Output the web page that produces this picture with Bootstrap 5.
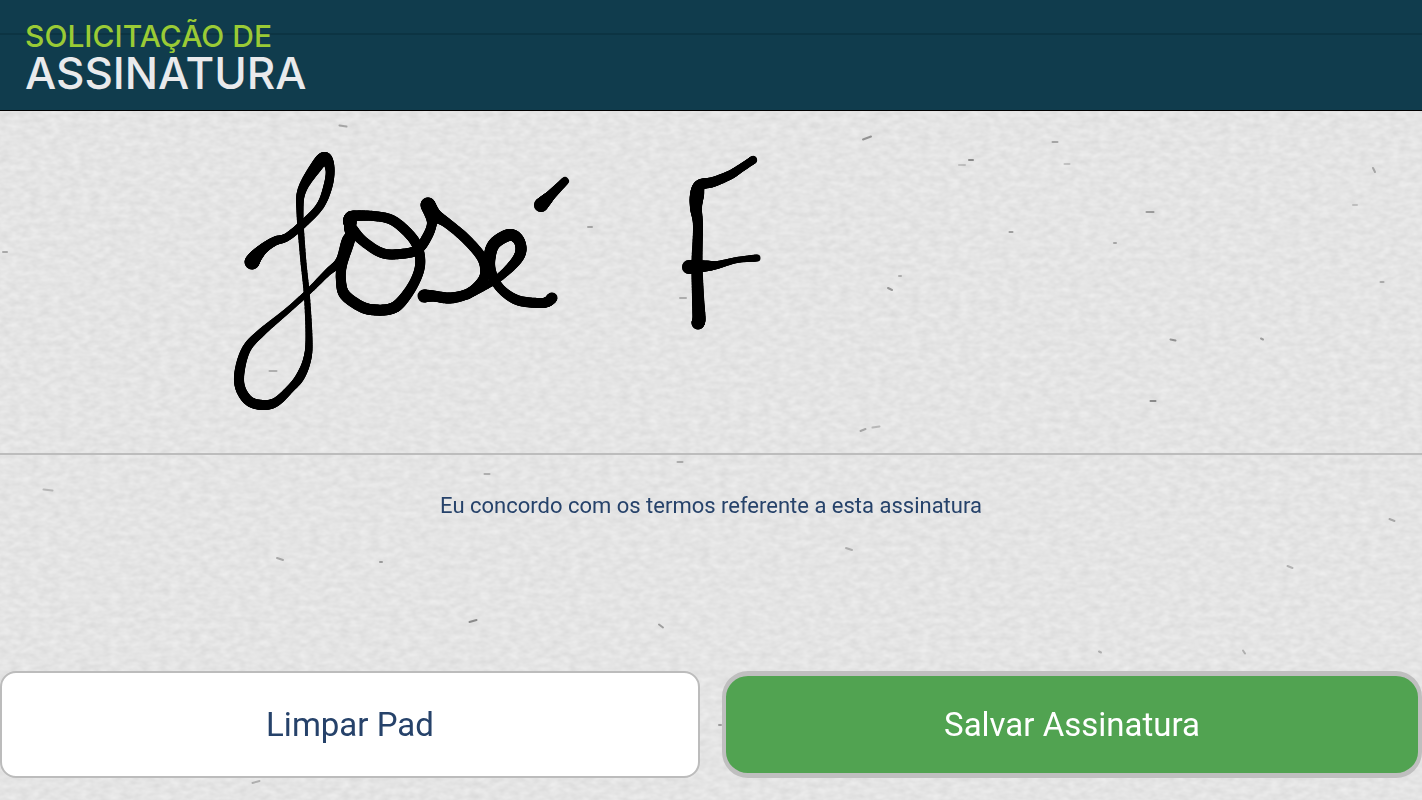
<!DOCTYPE html>
<html lang="pt-BR">
<head>
<meta charset="utf-8">
<meta name="viewport" content="width=device-width, initial-scale=1">
<title>Solicitação de Assinatura</title>
<link href="https://cdn.jsdelivr.net/npm/bootstrap@5.3.0/dist/css/bootstrap.min.css" rel="stylesheet">
<style>
  body { font-family: Roboto, "Liberation Sans", sans-serif; background: #e4e4e4; color: #26426a; }
  .paper { position: fixed; inset: 0; z-index: -1; width: 100%; height: 100%; }
  .top-bar {
    padding: 20px 25px 16px; border-bottom: 1px solid #000;
    background: linear-gradient(#103c4d 33px, #0c3443 33px, #0c3443 35px, #103c4d 35px);
  }
  .top-title { font-family: Inter, "Liberation Sans", sans-serif; font-weight: 500; color: #e9eaec; font-size: 44px; line-height: 42px; }
  .top-title .kicker { color: #9acb35; font-size: 30px; line-height: 32px; }
  .sign-pad { width: 100%; height: auto; touch-action: none; }
  .sign-line { height: 2px; background: #bdbdbd; }
  .terms { font-size: 22px; line-height: 30px; padding: 36px 16px; }
  .actions { gap: 22px; padding-bottom: 22px; }
  .pad-btn { --bs-btn-font-size: 33px; height: 107px; flex: 1 1 50%; }
  .pad-btn-clear { border: 2px solid #bcbcbc; border-radius: 16px; background: #fff; color: #26426a; }
  .pad-btn-save { border: 4px solid #bfbfbf; border-width: 5px 4px; border-radius: 26px; background: #51a351; color: #fff; }
  .pad-btn-clear:hover { background: #f4f4f4; }
  .pad-btn-save:hover { background: #458f45; color: #fff; }
</style>
</head>
<body class="d-flex flex-column min-vh-100">
<svg class="paper" aria-hidden="true">
  <filter id="grain" x="0" y="0" width="100%" height="100%" color-interpolation-filters="sRGB">
    <feTurbulence type="fractalNoise" baseFrequency=".1 .17" numOctaves="2" seed="8"/>
    <feColorMatrix values=".09 0 0 0 .85  .09 0 0 0 .85  .09 0 0 0 .85  0 0 0 0 1"/>
  </filter>
  <rect width="100%" height="100%" filter="url(#grain)"/>
  <g id="flecks" fill="none" stroke-linecap="round"></g>
</svg>

<header class="top-bar">
  <h1 class="top-title mb-0"><span class="kicker d-block">SOLICITAÇÃO DE</span>ASSINATURA</h1>
</header>

<main class="d-flex flex-column flex-grow-1">
  <canvas class="sign-pad d-block" id="pad" width="1422" height="342" role="img" aria-label="Assinatura"></canvas>
  <div class="sign-line"></div>
  <p class="terms text-center mb-0">Eu concordo com os termos referente a esta assinatura</p>
  <div class="actions d-flex mt-auto">
    <button type="button" class="btn pad-btn pad-btn-clear" id="clear">Limpar Pad</button>
    <button type="button" class="btn pad-btn pad-btn-save">Salvar Assinatura</button>
  </div>
</main>

<script src="https://cdn.jsdelivr.net/npm/bootstrap@5.3.0/dist/js/bootstrap.bundle.min.js"></script>
<script>
  // Pen strokes: x, y, pen width
  const strokes = [
    [[252,151,15],[256,145,13],[264,137,10],[275,130,9],[287,126,8],[303,113,8],[320,95,8],[328,75,9],[330,58,9],[325,47,12],[316,56,12],[302,79,9],[300,102,7],[303,146,6],[307,186,6],[309,229,7],[307,249,8],[300,266,9],[290,278,8],[276,291,9],[263,294,10],[249,290,10],[240,276,10],[240,258,10],[247,237,9],[262,221,8],[287,200,6],[307,182,6],[327,162,7],[340,150,9],[347,129,10],[354,122,10]],
    [[350,112,13],[350,108,13],[354,105,11],[373,105,10],[392,109,10],[409,123,10],[418,137,10],[420,155,10],[413,174,10],[400,192,11],[390,198,11],[376,199,11],[362,196,11],[345,184,11],[341,170,10],[342,154,10],[350,129,10],[350,116,12]],
    [[350,116,12],[363,130,10],[382,142,10],[400,143,10],[417,139,10],[427,126,10],[432,111,10],[428,94,15]],
    [[428,94,15],[435,104,13],[447,112,10],[466,128,10],[482,147,10],[485,163,10],[479,174,10],[467,183,10],[450,187,11],[433,185,11],[424,185,13]],
    [[467,184,9],[484,176,7],[501,165,8],[516,150,10],[521,139,11],[518,128,11],[509,124,12],[495,132,12],[490,144,12],[491,160,10],[500,177,9],[517,189,10],[538,192,10],[547,191,10],[552,187,11]],
    [[541,94,14],[546,89,12],[551,84,10],[565,70,8]],
    [[753,49,8],[741,57,8],[730,64,9],[713,71,10],[700,74,11],[697,84,14],[696,97,12],[698,115,10],[697,152,11],[698,186,12],[699,207,13],[698,212,13]],
    [[689,156,14],[706,155,11],[717,154,8],[737,149,6],[757,147,7]]
  ];
  const pad = document.getElementById('pad');
  const ink = pad.getContext('2d');
  const curve = (a, b, c, d, t) =>
    (2 * b + (c - a) * t + (2 * a - 5 * b + 4 * c - d) * t * t + (3 * b - a - 3 * c + d) * t * t * t) / 2;
  for (const s of strokes) {
    for (let i = 0; i < s.length - 1; i++) {
      const a = s[i - 1] || s[i], b = s[i], c = s[i + 1], d = s[i + 2] || c;
      let last = b;
      for (let k = 1; k <= 12; k++) {
        const p = [0, 1, 2].map(n => curve(a[n], b[n], c[n], d[n], k / 12));
        ink.lineWidth = p[2];
        ink.lineCap = 'round';
        ink.beginPath(); ink.moveTo(last[0], last[1]); ink.lineTo(p[0], p[1]); ink.stroke();
        last = p;
      }
      if (i === 0) { ink.beginPath(); ink.arc(b[0], b[1], b[2] / 2, 0, 7); ink.fill(); }
    }
  }
  document.getElementById('clear').addEventListener('click', () => ink.clearRect(0, 0, pad.width, pad.height));

  // Paper fibres: x, y, length, tilt, darkness
  const fibres = [[867,138,8,-3,.45],[971,160,4,0,.5],[962,165,6,0,.2],[1055,142,5,0,.35],[1067,164,5,0,.2],[1150,212,7,0,.4],[1011,232,3,0,.4],[473,621,7,-2,.5],[661,626,4,3,.4],[1374,170,2,4,.35],[1392,520,5,2,.35],[1290,567,5,2,.3],[849,549,6,2,.3],[1173,340,5,1,.45],[1262,339,2,1,.4],[1153,401,5,0,.5],[381,562,2,0,.4],[280,559,6,2,.35],[863,430,5,-2,.35],[876,427,7,-1,.25],[5,252,4,0,.35],[343,126,7,1,.35],[1115,243,2,0,.35],[890,289,4,2,.45],[273,371,7,0,.3],[683,298,6,0,.3],[1244,652,2,3,.3],[487,474,5,0,.3],[720,725,2,0,.4],[900,276,2,0,.3],[1382,282,3,0,.3],[48,490,9,1,.25],[256,782,7,-2,.3],[590,227,4,0,.35],[680,462,5,0,.3],[1100,652,2,1,.3],[1355,205,4,0,.2]];
  document.getElementById('flecks').innerHTML = fibres.map(([x, y, l, t, o]) =>
    `<path d="M${x - l / 2} ${y - t / 2}l${l} ${t}" stroke="#333" stroke-width="2" opacity="${o}"/>`).join('');
</script>
</body>
</html>
